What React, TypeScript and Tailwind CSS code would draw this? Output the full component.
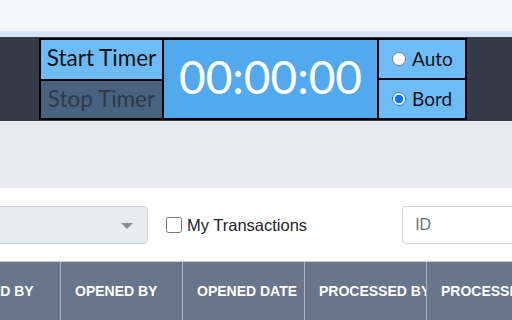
import React from "react";

const headers = ["CLOSED BY", "OPENED BY", "OPENED DATE", "PROCESSED BY", "PROCESSED DATE"];

export default function App() {
  return (
    <div className="w-[512px] h-[320px] overflow-hidden bg-white" style={{ fontFamily: "Lato, sans-serif" }}>
      {/* top bar */}
      <div className="h-[31px] bg-[#f3f6fb]" />
      <div className="h-[6px] bg-[#d7e2f4]" />

      {/* timer strip */}
      <div className="h-[84px] bg-[#343a46] pl-[39px] pt-[1px]">
        <div className="flex w-[428px] h-[82px] bg-black p-[2px] gap-[2px]">
          <div className="flex flex-col w-[121px] gap-[2px]">
            <button className="flex-1 bg-[#6dbcf8] text-[#111] text-[22.5px] leading-none pb-[2px]">Start Timer</button>
            <button className="flex-1 bg-[#49637f] text-[#2c3a4a] text-[22.5px] leading-none">Stop Timer</button>
          </div>
          <div className="w-[213px] bg-[#53a9ee] flex items-center justify-center text-white text-[46px] leading-none pb-[4px]">
            00:00:00
          </div>
          <div className="flex flex-col w-[86px] gap-[2px]">
            <label className="flex-1 bg-[#6dbcf8] flex items-center pl-[13px] gap-[6px] text-[19px] text-[#111]">
              <input type="radio" name="mode" className="w-[14px] h-[14px] m-0" />
              Auto
            </label>
            <label className="flex-1 bg-[#6dbcf8] flex items-center pl-[13px] gap-[6px] text-[19px] text-[#111]">
              <input type="radio" name="mode" defaultChecked className="w-[14px] h-[14px] m-0" />
              Bord
            </label>
          </div>
        </div>
      </div>

      {/* gray gap */}
      <div className="h-[67px] bg-[#e9eaef]" />

      {/* filters */}
      <div className="bg-white" style={{ fontFamily: '"Liberation Sans", Arial, sans-serif' }}>
        <div className="flex items-center h-[73px] pt-[1px]">
          <div className="relative shrink-0 ml-[-40px] w-[188px] h-[38px] rounded-[4px] border border-[#ced4da] bg-[#e9ecef]">
            <span className="absolute right-[14px] top-[16px] w-0 h-0 border-l-[6px] border-r-[6px] border-t-[6px] border-l-transparent border-r-transparent border-t-[#8a8f95]" />
          </div>
          <label className="flex shrink-0 items-center ml-[18px] gap-[5px] text-[16.5px] text-[#212529] whitespace-nowrap">
            <input type="checkbox" className="w-[16px] h-[16px] m-0" />
            My Transactions
          </label>
          <div className="ml-[95px] w-[200px] h-[38px] rounded-[4px] border border-[#ced4da] flex items-center pl-[12px] text-[16px] text-[#6c757d] shrink-0">
            ID
          </div>
        </div>

        {/* table header */}
        <div className="flex ml-[-62px] h-[60px] bg-[#68758b] border-t border-[#c9cdd3]">
          {headers.map((h, i) => (
            <div
              key={h}
              className={`w-[122px] shrink-0 flex items-center pl-[14px] text-white text-[14px] font-bold whitespace-nowrap overflow-hidden ${i > 0 ? "border-l border-[#aeb4be]" : ""}`}
            >
              {h}
            </div>
          ))}
        </div>
      </div>
    </div>
  );
}
